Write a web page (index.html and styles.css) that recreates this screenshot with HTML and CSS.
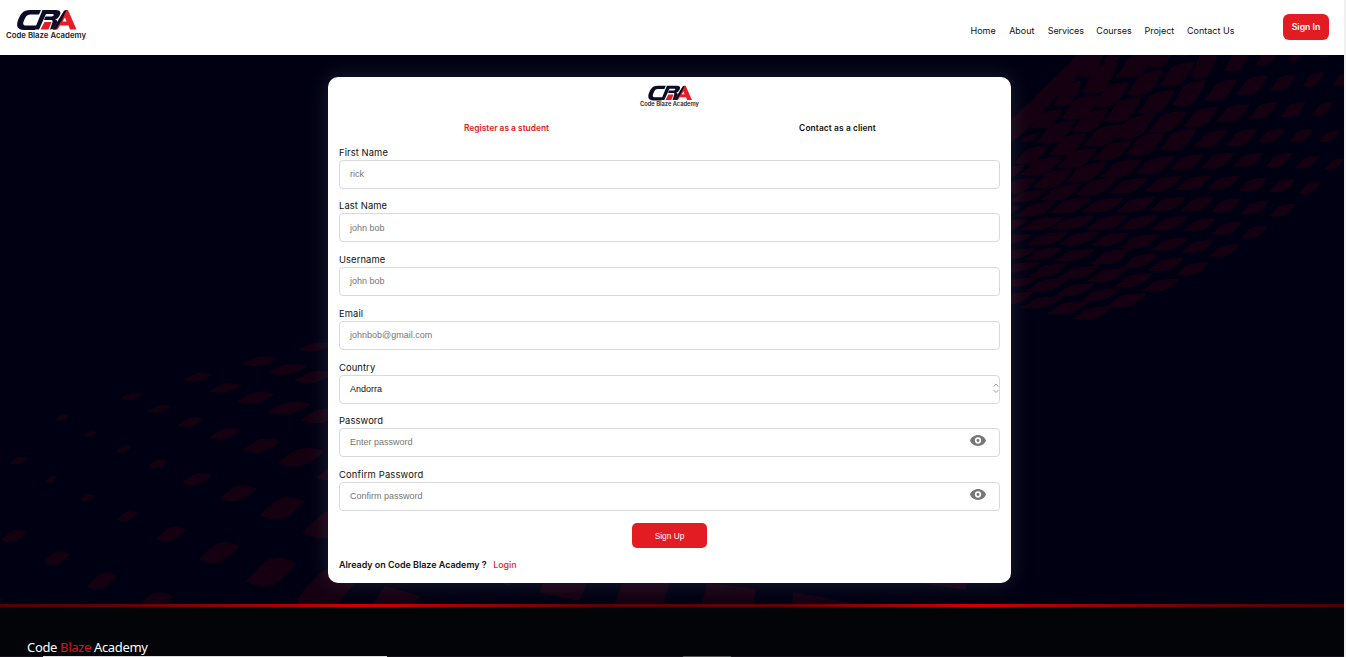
FILE: index.html
```html
<!DOCTYPE html>
<html lang="en">
<head>
<meta charset="utf-8">
<title>Code Blaze Academy</title>
<link rel="stylesheet" href="styles.css">
</head>
<body>
<svg width="0" height="0" class="defs">
  <symbol id="logo" viewBox="0 0 82 34">
    <path d="M36 1H25C18 1 15.500 5 13.500 10C10.500 17 12.500 21 19 21H30L32 16.500H21C18 16.500 17.500 15 19 11.500C20.500 7.500 22 5.500 25 5.500H34Z" fill="#0b0d26"/>
    <path d="M37.500 1H51C56 1 56.500 4 54 7.500C53 9.300 51.500 10 50 10.500C53 11 52.500 13.500 51 16.500C49.500 19.500 47.500 20.500 45 20.500L47.500 13C48 11.500 47 11 45.500 11H39L40.500 7.500H46C49 7.500 50 5 47 5H41L34 20.500H29.500Z" fill="#0b0d26"/>
    <path d="M39.500 13H46.500L43.500 20.500H35.500Z" fill="#e31e26"/>
    <path d="M47.500 20.500L59 2Q60 1 61.500 1H63L71.500 20.500H65L63.500 16.500H55L52.500 20.500Z" fill="#e31e26"/>
    <path d="M52.500 12.500L59 2Q60 1 61.500 1L57 11L51 20.500H47.500Z" fill="#0b0d26"/>
    <path d="M57.500 12.500H61.500L60 8.500Z" fill="#fff"/>
    <text x="1" y="29" textLength="80" lengthAdjust="spacingAndGlyphs" class="logo-text">Code Blaze Academy</text>
  </symbol>
  <symbol id="eye" viewBox="1 4.5 22 15"><path fill="#777" fill-rule="evenodd" d="M12 4.500C7 4.500 2.700 7.600 1 12c1.700 4.400 6 7.500 11 7.500s9.300-3.100 11-7.500C21.300 7.600 17 4.500 12 4.500zM12 16.300a4.300 4.300 0 1 1 0-8.600 4.300 4.300 0 0 1 0 8.600zm0-6.300a2 2 0 1 0 0 4 2 2 0 0 0 0-4z"/></symbol>
</svg>
<div class="page">
  <header class="header">
    <svg class="brand"><use href="#logo"/></svg>
    <nav class="nav">
      <a class="home">Home</a><a class="about">About</a><a class="services">Services</a><a class="courses">Courses</a><a class="project">Project</a><a class="contact">Contact Us</a>
    </nav>
    <button class="signin">Sign In</button>
  </header>
  <main class="hero">
    <svg class="pattern" viewBox="0 55 1344 549"><g id="tiles" fill="#150012"></g></svg>
    <form class="card">
      <svg class="card-logo"><use href="#logo"/></svg>
      <div class="tabs"><a class="active"><span>Register as a student</span></a><a><span>Contact as a client</span></a></div>
      <div class="field"><label>First Name</label><div class="input">rick</div></div>
      <div class="field"><label>Last Name</label><div class="input">john bob</div></div>
      <div class="field"><label>Username</label><div class="input">john bob</div></div>
      <div class="field"><label>Email</label><div class="input">johnbob@gmail.com</div></div>
      <div class="field"><label>Country</label><div class="input select">Andorra<svg class="arrows" viewBox="0 0 8 12"><path d="M1.500 4.500L4 2L6.500 4.500M1.500 8L4 10.500L6.500 8" fill="none" stroke="#999"/></svg></div></div>
      <div class="field"><label>Password</label><div class="input">Enter password<svg class="eye"><use href="#eye"/></svg></div></div>
      <div class="field"><label class="confirm">Confirm Password</label><div class="input">Confirm password<svg class="eye"><use href="#eye"/></svg></div></div>
      <button class="signup">Sign Up</button>
      <p class="already"><span>Already on Code Blaze Academy ?</span><a>Login</a></p>
    </form>
  </main>
  <div class="divider"></div>
  <footer class="footer">
    <div class="footer-brand">Code <em>Blaze</em> Academy</div>
    <div class="bottom"><i class="long"></i><i class="short"></i></div>
  </footer>
</div>
<script src="pattern.js"></script>
</body>
</html>
```
FILE: styles.css
```css
* { box-sizing: border-box; }
body { margin: 0; height: 657px; overflow: hidden; background: #f0f0f0; font-family: Inter, "Open Sans", sans-serif; font-size: 9px; color: #111; }
.defs { position: absolute; }
.page { width: 1344px; height: 657px; display: flex; flex-direction: column; }
.logo-text { font: 600 7.6px Inter, sans-serif; fill: #222; }
.header { height: 55px; flex: none; background: #fff; display: flex; align-items: flex-start; padding: 9px 15px 0 5px; }
.brand { width: 82px; height: 34px; overflow: visible; }
.nav { margin-left: auto; display: flex; padding-top: 15px; line-height: 14px; margin-right: 48px; gap: 12.6px; }
.nav a { white-space: nowrap; }
.home { width: 26px; } .about { width: 26px; } .services { width: 36px; letter-spacing: -.1px; } .courses { width: 35.5px; } .project { width: 30px; } .contact { width: 48px; }
.signin { width: 46px; height: 26px; margin-top: 5px; padding: 0; border: 0; border-radius: 6px; background: #e31b23; color: #fff; font: 600 8.7px Inter, sans-serif; }
.hero { height: 549px; flex: none; position: relative; background: #000013; padding: 22px 0 0 328px; }
.pattern { position: absolute; left: 0; top: 0; width: 1344px; height: 549px; }
.card { position: relative; width: 683px; height: 506px; background: #fff; border-radius: 10px; box-shadow: 0 0 20px rgba(225,240,255,.13); padding: 8px 11px; display: flex; flex-direction: column; }
.card-logo { width: 61px; height: 25px; align-self: center; flex: none; overflow: visible; }
.tabs { display: grid; grid-template-columns: 1fr 1fr; margin: 11px 0 10.78px; line-height: 14px; text-align: center; font-size: 8.4px; font-weight: 600; padding: 0 0 0 3px; }
.tabs a + a { padding-left: 4px; letter-spacing: .1px; }
.active { color: #e31b23; }
.field { height: 53.7px; flex: none; }
.field label { display: block; height: 14px; line-height: 14px; font-size: 9.4px; letter-spacing: .1px; }
.field .confirm { letter-spacing: .18px; }
.input { height: 29px; border: 1px solid #d9d9dc; border-radius: 4px; line-height: 26px; padding: 0 0 .5px 10px; color: #757575; font-family: "Liberation Sans", sans-serif; font-size: 9px; display: flex; align-items: center; }
.select { color: #111; }
.arrows { width: 8px; height: 12px; margin: -2px -1px 0 auto; }
.eye { width: 16px; height: 11px; margin: -4px 13px 0 auto; }
.signup { align-self: center; width: 75px; height: 25px; flex: none; border: 0; border-radius: 5px; background: #e31b23; color: #fff; font: 8.3px "Liberation Sans", sans-serif; margin: 1.2px 0 0 0; padding-top: 2px; }
.already { margin: 10px 0 0; display: flex; gap: 6.5px; line-height: 14px; font-size: 8.93px; font-weight: 600; }
.already a { color: #d72a25; font-weight: 500; }
.divider { height: 3px; flex: none; background: linear-gradient(90deg, #520005 0, #610006 115px, #c80000 345px, #c80000 390px, #5c0006 600px, #610006 780px, #d00000 975px, #690006 1210px, #4e0005 1344px); }
.footer { flex: 1; background: #020407; color: #fff; display: flex; flex-direction: column; justify-content: flex-end; }
.footer-brand { font: 13px/18px "Noto Sans", sans-serif; padding-left: 27px; letter-spacing: -.34px; }
.footer-brand em { color: #d5131b; font-style: normal; }
.bottom { height: 1px; background: #18121e; display: flex; padding-left: 43px; gap: 296px; }
.long { width: 344px; background: #ddd; } .short { width: 48px; background: #555; }
```
FILE: pattern.js
```js
// Tile bounds as x1,y1,x2,y2 in third-pixel units from each group's origin.
const groups = [
  { x: 1000, y: 50, tiles: `310,-20,375,42 440,-10,525,55 533,-20,580,22 345,5,467,88 570,-10,660,90 672,-10,755,68 768,-15,840,50 863,-15,918,36 957,-15,1003,25
235,5,312,85 243,35,355,135 477,35,585,112 378,60,490,140 515,90,618,173 612,88,712,155 708,76,803,138 810,72,888,125 905,66,972,113 995,66,1060,110
160,92,245,172 278,95,388,175 412,120,525,195 548,170,655,235 645,162,748,220 745,156,833,210 840,156,917,205 935,156,999,199
180,135,300,213 310,140,425,222 443,183,560,250 90,178,187,238 213,178,325,250 343,192,465,270 477,235,592,305 578,240,683,295 677,236,772,290 771,236,856,280 866,236,940,278 957,240,1020,278
107,212,225,285 245,223,375,292 375,247,495,320 507,312,613,362 600,308,703,358 697,309,790,352 793,309,877,355 885,317,957,357 973,325,1032,361
145,250,260,320 275,273,395,335 402,318,525,375 60,252,115,277 40,287,145,345 170,295,292,358 300,328,425,385 430,378,545,428 525,377,633,423 620,377,720,421 715,383,802,426 805,386,887,428 893,394,962,435
60,320,188,380 195,337,320,400 325,383,445,433 -10,345,75,385 95,358,218,418 222,384,350,440 345,440,467,490 447,440,557,486 538,440,643,487 630,445,725,490 720,452,807,496 807,461,886,502
-5,383,110,435 120,403,243,455 240,443,372,490 355,495,475,540 450,498,562,543 545,505,648,547 632,515,725,557 720,527,803,567
20,420,140,458 145,443,272,493 255,495,385,542 270,548,388,590 358,552,477,597 450,563,565,604 542,570,641,611 625,583,718,623
45,457,167,502 150,497,285,540 175,545,300,587 270,598,390,645 365,611,475,655 443,622,552,665 525,635,628,679
60,500,190,543 75,546,205,588 160,597,285,635 258,653,385,698 340,669,460,713 423,686,537,727
-30,508,85,542 -20,552,100,583 75,592,185,632 170,647,300,688 -10,595,110,628 85,640,205,683 0,635,122,668 75,684,205,727 0,682,115,712 162,700,285,741 240,714,362,755 315,729,440,774 -10,725,100,765 60,738,187,777 138,753,265,795 215,769,337,811 -40,467,62,502` },
  { x: 0, y: 320, tiles: `893,65,1000,95 725,107,833,139 803,128,922,166 882,150,1000,191 550,156,632,187 627,187,726,220 710,213,822,253 800,241,932,286 900,262,1030,312 363,217,426,240 445,254,512,280 532,289,610,323 628,320,722,361 728,351,841,401 834,379,972,441 950,425,1080,485 168,282,208,303 253,331,292,350 348,375,393,399 441,416,503,446 545,456,635,497 658,491,769,547 778,526,913,600 907,560,1070,658 30,408,81,434 135,466,172,490 240,522,286,545 352,569,414,605 467,617,559,667 597,661,716,732 738,706,888,803 3,626,80,668 130,690,211,737 262,753,351,811 405,812,520,880 -20,354,5,364 -30,835,8,850` }
];
const polys = [
  "M1077 55L1092 55L1075 80L1053 100L1030 127L1008 145L1008 123Z",
  "M328 568L355 583L337 604L299 604L298 598Q312 578 328 568Z",
  "M372 604L385 586L420 596L415 604Z", "M500 583L510 583L509 586Z",
  "M543 583L587 583L579 601L539 592Z", "M622 583L670 583L663 604L615 604Z",
  "M707 583L756 589L753 604L702 604Z", "M793 592L857 604L792 604Z", "M920 583L966 583L966 590Z"
];
const shapes = [
  // wide tiles with rounded long corners
  [[0, .9], [.14, .75], [.3, .3], [.45, .04], [1, 0], [.92, .3], [.73, .68], [.52, 1.08]],
  // squarer tiles with shallow curves
  [[0, .8], [.1, .62], [.32, .28], [.6, -.1], [1, .25], [.9, .5], [.65, .8], [.4, 1.14]]
];
groups.forEach((g, i) => {
  const s = shapes[i];
  for (const t of g.tiles.split(/\s+/)) {
    const [a, b, c, d] = t.split(",").map(Number);
    const x = g.x + a / 3, y = g.y + b / 3, w = (c - a) / 3, h = (d - b) / 3;
    const p = k => (x + w * s[k][0]).toFixed(1) + " " + (y + h * s[k][1]).toFixed(1);
    polys.push(`M${p(0)}Q${p(1)} ${p(2)}Q${p(3)} ${p(4)}Q${p(5)} ${p(6)}Q${p(7)} ${p(0)}Z`);
  }
});
document.getElementById("tiles").innerHTML = polys.map(d => `<path d="${d}"/>`).join("");
```
